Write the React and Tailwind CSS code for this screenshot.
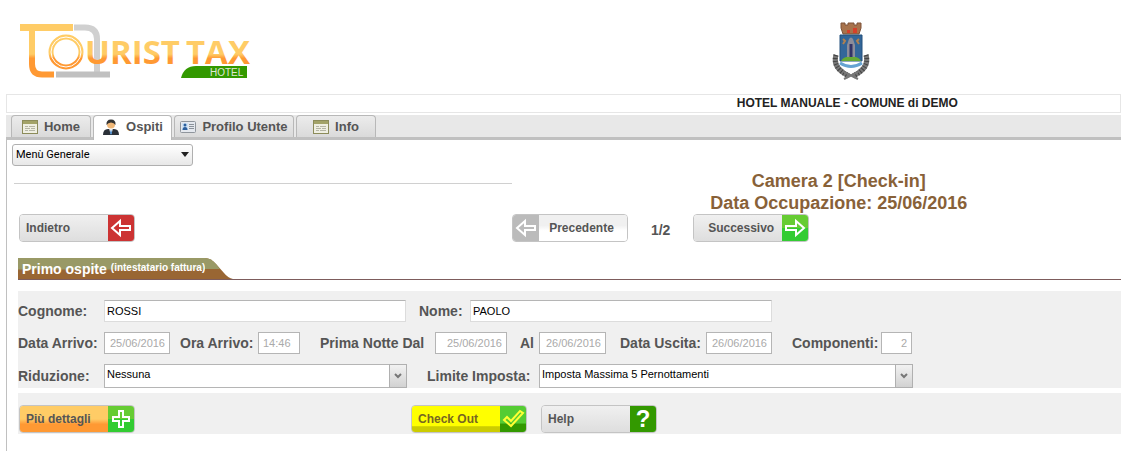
import { useState } from "react"

const ARROW_LEFT = "M4 13 L12 6 V11 H22 V15 H12 V20 Z"
const ARROW_RIGHT = "M22 13 L14 6 V11 H4 V15 H14 V20 Z"

function Logo() {
  return (
    <svg width="232" height="62" viewBox="0 0 232 62" role="img" aria-label="Tourist Tax Hotel">
      <defs>
        <linearGradient id="oro" gradientUnits="userSpaceOnUse" x1="0" y1="6" x2="0" y2="58">
          <stop offset="0.58" stopColor="#ffcc66" />
          <stop offset="0.66" stopColor="#ff9933" />
        </linearGradient>
      </defs>
      <path d="M55 9.500 H66 Q78 9.500 78 21 V56" fill="none" stroke="#d0d0d0" strokeWidth="6" />
      <path d="M37 56.500 H91" stroke="#c0c0c0" strokeWidth="6" />
      <path d="M1 9.500 H54" stroke="#ffcc66" strokeWidth="7" />
      <path d="M13 10 V46 Q13 56.500 23 56.500 H35" fill="none" stroke="url(#oro)" strokeWidth="6" />
      <circle cx="47" cy="34" r="15" fill="#fff" stroke="url(#oro)" strokeWidth="5" />
      <circle cx="47" cy="34" r="15" fill="none" stroke="#fff" strokeWidth="1" />
      <g fill="url(#oro)" fontFamily="'Open Sans', sans-serif" fontSize="33" fontWeight="700">
        <text x="66" y="46">URIST</text>
        <text x="167" y="46">TAX</text>
      </g>
      <path d="M162 60 Q165 48 177 48 H228 V60 Z" fill="#339900" />
      <text x="191" y="58" fill="#e0e8d8" fontFamily="'Liberation Sans', sans-serif" fontSize="10">HOTEL</text>
    </svg>
  )
}

function Stemma() {
  return (
    <svg width="38" height="58" viewBox="0 0 38 58" role="img" aria-label="Stemma del comune">
      <path d="M4 33 Q0 46 17 54" fill="none" stroke="#777" strokeWidth="5" />
      <path d="M34 33 Q38 46 21 54" fill="none" stroke="#777" strokeWidth="5" />
      <path d="M4 33 Q0 46 17 54 M34 33 Q38 46 21 54" fill="none" stroke="#444" strokeWidth="5" strokeDasharray="1 2" />
      <path d="M12 50 L26 57 M26 50 L12 57" stroke="#777" strokeWidth="2" />
      <path d="M9 1 H13 V3 H16 V1 H22 V3 H25 V1 H29 V6 L27 12 H11 L9 6 Z" fill="#a8734c" stroke="#7d5238" />
      <path d="M15 8 H18 V11 H15 Z M21 6 H25 V11 H21 Z" fill="#d6402a" />
      <path d="M8 13 H30 V39 H8 Z" fill="#336699" stroke="#24507c" />
      <path d="M9 39 Q12 34 19 35 Q26 34 29 39 Z" fill="#66aa33" />
      <path d="M17 17 Q19 14 21 17 L23 23 V35 H15 V23 Z" fill="#8c8c99" />
      <path d="M19 22 V35" stroke="#333366" strokeWidth="3" />
      <path d="M11 17 L13 19 L11 22 M27 17 L25 19 L27 22" fill="none" stroke="#b08050" strokeWidth="2" />
      <path d="M8 41 Q19 48 30 41" fill="none" stroke="#66a3d2" strokeWidth="3" />
    </svg>
  )
}

function WindowIcon() {
  return (
    <svg width="16" height="14" viewBox="0 0 16 14">
      <rect x="0.5" y="0.5" width="15" height="13" fill="#efefe2" stroke="#8c8c5a" />
      <rect x="1" y="1" width="14" height="3" fill="#a3a368" />
      <path d="M3 6.500 H6 M7 6.500 H13 M3 8.500 H8 M9 8.500 H13 M3 10.500 H6 M7 10.500 H13" stroke="#b5b5a5" />
    </svg>
  )
}

function PersonIcon() {
  return (
    <svg width="18" height="17" viewBox="0 0 18 17">
      <path d="M1 16 Q1 10 6 10 H12 Q17 10 17 16 Z" fill="#2b3038" />
      <path d="M7 9 H11 L9.500 15 H8.500 Z" fill="#fff" />
      <path d="M9 10 L10 14 L9 16 L8 14 Z" fill="#3a7fc4" />
      <circle cx="9" cy="5.500" r="4" fill="#f0b878" />
      <path d="M4.500 6 Q4 0.500 9 0.500 Q14 0.500 13.500 6 Q12 3.500 9 3.500 Q6 3.500 4.500 6 Z" fill="#333" />
    </svg>
  )
}

function CardIcon() {
  return (
    <svg width="16" height="12" viewBox="0 0 16 12">
      <rect x="0.500" y="0.500" width="15" height="11" rx="1" fill="#e4e8ee" stroke="#8f959c" />
      <rect x="2" y="2" width="6" height="7" fill="#cfe2f5" />
      <circle cx="5" cy="4" r="1.500" fill="#2b5f9e" />
      <path d="M2.500 9 Q2.500 6 5 6 Q7.500 6 7.500 9 Z" fill="#2b5f9e" />
      <path d="M9 3.500 H14 M9 5.500 H14 M9 7.500 H14" stroke="#8a9199" />
    </svg>
  )
}

const TABS = [
  { label: "Home", icon: <WindowIcon />, width: "w-[80px]" },
  { label: "Ospiti", icon: <PersonIcon />, width: "w-[79px]" },
  { label: "Profilo Utente", icon: <CardIcon />, width: "w-[120px]" },
  { label: "Info", icon: <WindowIcon />, width: "w-[80px]" },
]

function Tab({ tab, active, onSelect }) {
  return (
    <a
      href="#"
      onClick={(e) => {
        e.preventDefault()
        onSelect(tab.label)
      }}
      className={`flex items-center justify-center gap-1.5 rounded-t border border-b-0 border-[#b8b8b8] text-[13px] leading-4 font-bold text-[#555] ${tab.width} ${
        active ? "h-[25px] bg-white pb-0.5" : "h-[22px] bg-linear-to-b from-[#ececec] to-[#dadada]"
      }`}
    >
      {tab.icon}
      {tab.label}
    </a>
  )
}

function IconButton({ children, icon, iconClass, bodyClass, iconFirst, disabled }) {
  return (
    <button
      type="button"
      disabled={disabled}
      className={`flex h-7 w-[116px] shrink-0 overflow-hidden rounded border border-[#c4c4c4] text-left text-xs font-bold text-[#555] ${
        iconFirst ? "flex-row-reverse" : ""
      }`}
    >
      <span className={`flex h-full flex-1 items-center ${bodyClass}`}>{children}</span>
      <span className={`grid h-full w-[26px] place-items-center ${iconClass}`}>{icon}</span>
    </button>
  )
}

function Glyph({ d, stroke = "#fff", fill = "none" }) {
  return (
    <svg width="26" height="26" viewBox="0 0 26 26">
      <path d={d} fill={fill} stroke={stroke} strokeWidth="2" />
    </svg>
  )
}

function Field({ id, label, value, labelClass, inputClass, disabled }) {
  return (
    <>
      <label htmlFor={id} className={`shrink-0 whitespace-nowrap text-sm font-bold text-[#555] ${labelClass}`}>
        {label}
      </label>
      <input
        id={id}
        defaultValue={value}
        disabled={disabled}
        className={`h-[22px] shrink-0 border bg-white text-[11px] outline-none ${
          disabled ? "border-[#b5b5b5] px-1 text-[#aaa]" : "border-[#dcdcdc] border-t-[#b5b5b5] px-0.5 text-black"
        } ${inputClass}`}
      />
    </>
  )
}

function Combo({ id, label, options, labelClass, selectClass }) {
  return (
    <>
      <label htmlFor={id} className={`shrink-0 whitespace-nowrap text-sm font-bold text-[#555] ${labelClass}`}>
        {label}
      </label>
      <span className={`relative shrink-0 ${selectClass}`}>
        <select
          id={id}
          className="block h-[24px] w-full appearance-none border border-[#b5b5b5] bg-white px-0.5 pb-1 text-[11px] text-black outline-none"
        >
          {options.map((o) => (
            <option key={o}>{o}</option>
          ))}
        </select>
        <span className="pointer-events-none absolute inset-y-0 right-0 grid w-[18px] place-items-center border border-[#b0b0b0] bg-linear-to-b from-[#f2f2f2] to-[#d2d2d2]">
          <svg width="8" height="6" viewBox="0 0 8 6">
            <path d="M1 1 L4 4 L7 1" fill="none" stroke="#777" strokeWidth="2" />
          </svg>
        </span>
      </span>
    </>
  )
}

export default function App() {
  const [activeTab, setActiveTab] = useState("Ospiti")

  return (
    <div className="bg-white pr-[3px] pl-1.5 font-['Liberation_Sans',Arial,sans-serif]">
      <header className="flex h-[94px] items-start justify-between pt-[18px] pl-[13px]">
        <Logo />
        <div className="flex w-[49%] justify-center pt-1">
          <Stemma />
        </div>
      </header>

      <div className="flex h-[19px] justify-end border border-[#e6e6e6]">
        <h1 className="w-[49%] text-center text-xs leading-4 font-bold text-[#222]">
          HOTEL MANUALE - COMUNE di DEMO
        </h1>
      </div>

      <nav className="mt-0.5 flex h-[25px] gap-0.5 border-b-[3px] border-[#c0c0c0] bg-[#e8e8e8] pl-[5px]">
        {TABS.map((tab) => (
          <Tab key={tab.label} tab={tab} active={tab.label === activeTab} onSelect={setActiveTab} />
        ))}
      </nav>

      <main className="border-l border-[#c0c0c0] pt-1 pb-[18px]">
        <div className="relative ml-[5px] w-[181px]">
          <select
            aria-label="Menù"
            className="block h-[22px] w-full appearance-none rounded-[3px] border border-[#b0b0b0] bg-linear-to-b from-white to-[#e8e8e8] px-[3px] font-[Roboto,sans-serif] text-[11px] text-black outline-none"
          >
            <option>Menù Generale</option>
          </select>
          <svg className="pointer-events-none absolute top-2 right-1" width="8" height="5" viewBox="0 0 8 5">
            <path d="M0 0 H8 L4 5 Z" fill="#222" />
          </svg>
        </div>

        <div className="flex justify-between pt-1 pl-[7px]">
          <hr className="mt-[13px] w-[45%] border-[#d0d0d0]" />
          <h2 className="w-[51%] text-center text-lg leading-[22px] font-bold text-[#886138]">
            Camera 2 [Check-in]
            <br />
            Data Occupazione: 25/06/2016
          </h2>
        </div>

        <div className="flex pl-[7px]">
          <div className="w-[45%] pl-[5px]">
            <IconButton
              bodyClass="bg-linear-to-b from-[#f0f0f0] to-[#dedede] pl-1.5"
              iconClass="bg-[#cc3333]"
              icon={<Glyph d={ARROW_LEFT} />}
            >
              Indietro
            </IconButton>
          </div>
          <div className="flex">
            <IconButton
              iconFirst
              disabled
              bodyClass="bg-linear-to-b from-[#f0f0f0] from-40% to-white to-60% pl-2.5"
              iconClass="bg-[#bbb]"
              icon={<Glyph d={ARROW_LEFT} />}
            >
              Precedente
            </IconButton>
            <span className="w-[65px] pt-1.5 text-center text-sm font-bold text-[#555]">1/2</span>
            <IconButton
              bodyClass="bg-linear-to-b from-[#f0f0f0] to-[#dedede] pl-3.5"
              iconClass="bg-linear-to-b from-[#66cc33] from-50% to-[#33cc33] to-50%"
              icon={<Glyph d={ARROW_RIGHT} />}
            >
              Successivo
            </IconButton>
          </div>
        </div>

        <section className="pl-[11px]">
          <div className="mt-4 flex border-b border-[#7d5c5c]">
            <h3 className="flex h-[21px] items-center gap-1 bg-linear-to-b from-[#999966] from-50% to-[#996633] to-60% pl-1 text-sm font-bold text-white">
              Primo ospite <span className="text-[10px]">(intestatario fattura)</span>
            </h3>
            <svg width="28" height="21" viewBox="0 0 28 21">
              <path d="M0 0 Q6 0 11 6 L19 15 Q23 20 28 21 H0 Z" fill="#996633" />
              <path d="M0 0 Q6 0 11 6 L15 11 H0 Z" fill="#999966" />
            </svg>
          </div>

          <form className="mt-[11px] overflow-hidden bg-[#f0f0f0] pt-[9px]">
            <div className="flex items-center">
              <Field id="cognome" label="Cognome:" value="ROSSI" labelClass="w-[86px]" inputClass="w-[302px]" />
              <Field id="nome" label="Nome:" value="PAOLO" labelClass="w-[64px] pl-[13px]" inputClass="w-[302px]" />
            </div>
            <div className="flex items-center pt-2.5">
              <Field disabled id="data-arrivo" label="Data Arrivo:" value="25/06/2016" labelClass="w-[86px]" inputClass="w-[66px] text-right" />
              <Field disabled id="ora-arrivo" label="Ora Arrivo:" value="14:46" labelClass="w-[88px] pl-2.5" inputClass="w-[42px]" />
              <Field disabled id="notte-dal" label="Prima Notte Dal" value="25/06/2016" labelClass="w-[135px] pl-5" inputClass="w-[72px] text-right" />
              <Field disabled id="notte-al" label="Al" value="26/06/2016" labelClass="w-[32px] pl-[13px]" inputClass="w-[67px] text-right" />
              <Field disabled id="data-uscita" label="Data Uscita:" value="26/06/2016" labelClass="w-[100px] pl-3.5" inputClass="w-[66px] text-right" />
              <Field disabled id="componenti" label="Componenti:" value="2" labelClass="w-[109px] pl-5" inputClass="w-[31px] text-right" />
            </div>
            <div className="flex items-center pt-2.5">
              <Combo id="riduzione" label="Riduzione:" options={["Nessuna"]} labelClass="w-[86px]" selectClass="w-[303px]" />
              <Combo
                id="limite"
                label="Limite Imposta:"
                options={["Imposta Massima 5 Pernottamenti"]}
                labelClass="w-[132px] pl-5"
                selectClass="w-[374px]"
              />
            </div>
          </form>

          <div className="mt-[5px] flex bg-[#f0f0f0] pt-3 pb-px pl-px">
            <div className="w-[392px]">
              <IconButton
                bodyClass="bg-linear-to-b from-[#ffcc66] from-50% to-[#ff9933] to-70% pl-1.5"
                iconClass="bg-linear-to-b from-[#66cc33] from-50% to-[#33cc33] to-50%"
                icon={<Glyph d="M11 5 H15 V11 H21 V15 H15 V21 H11 V15 H5 V11 H11 Z" />}
              >
                Più dettagli
              </IconButton>
            </div>
            <div className="flex gap-3.5">
              <IconButton
                bodyClass="bg-linear-to-b from-[#ffff00] from-75% to-[#cccc00] to-80% pl-1.5 text-[#776622]"
                iconClass="bg-linear-to-b from-[#55cc33] from-65% to-[#339900] to-70%"
                icon={<Glyph stroke="#ffff33" d="M4 14 L7 11 L11 15 L20 5 L23 7 L11 20 Z" />}
              >
                Check Out
              </IconButton>
              <IconButton
                bodyClass="bg-linear-to-b from-[#f0f0f0] to-[#dedede] pl-1.5"
                iconClass="bg-[#339900] text-2xl leading-6 text-white"
                icon="?"
              >
                Help
              </IconButton>
            </div>
          </div>
        </section>
      </main>
    </div>
  )
}
